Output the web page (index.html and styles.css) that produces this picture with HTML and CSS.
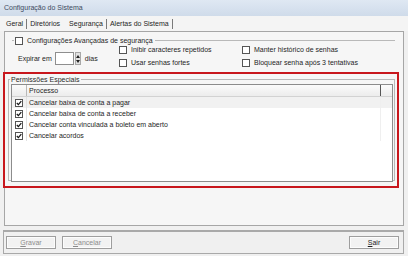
FILE: index.html
```html
<!DOCTYPE html>
<html lang="pt">

<head>
    <meta charset="UTF-8">
    <title>Configuração do Sistema</title>
    <link rel="stylesheet" href="styles.css">
</head>

<body>

    <div class="window">
        <div class="titlebar">Configuração do Sistema</div>

        <div class="tabs">
            <span class="tab sep">Geral</span>
            <span class="tab">Diretórios</span>
            <span class="tab active sep">Segurança</span>
            <span class="tab sep">Alertas do Sistema</span>
        </div>

        <div class="panel">
            <fieldset class="group adv">
                <legend><span class="cb"></span>Configurações Avançadas de segurança</legend>
                <div class="adv-body">
                    <div class="expire">
                        <span>Expirar em</span>
                        <span class="num"></span>
                        <span class="spin"><i class="up"></i><i class="down"></i></span>
                        <span class="unit">dias</span>
                    </div>
                    <div class="col col1">
                        <label class="opt"><span class="cb"></span>Inibir caracteres repetidos</label>
                        <label class="opt"><span class="cb"></span>Usar senhas fortes</label>
                    </div>
                    <div class="col">
                        <label class="opt"><span class="cb"></span>Manter histórico de senhas</label>
                        <label class="opt"><span class="cb"></span>Bloquear senha após 3 tentativas</label>
                    </div>
                </div>
            </fieldset>

            <div class="highlight">
                <fieldset class="group perm">
                    <legend>Permissões Especiais</legend>
                    <div class="grid">
                        <div class="grid-head">
                            <span class="c-check"></span>
                            <span class="c-text">Processo</span>
                            <span class="c-end"></span>
                        </div>
                        <div class="grid-row sel">
                            <span class="c-check"><span class="cb on"><svg viewBox="0 0 6 6"><path d="M0.8 3 L2.4 4.6 L5.3 1.2" /></svg></span></span>
                            <span class="c-text">Cancelar baixa de conta a pagar</span>
                            <span class="c-end"></span>
                        </div>
                        <div class="grid-row">
                            <span class="c-check"><span class="cb on"><svg viewBox="0 0 6 6"><path d="M0.8 3 L2.4 4.6 L5.3 1.2" /></svg></span></span>
                            <span class="c-text">Cancelar baixa de conta a receber</span>
                            <span class="c-end"></span>
                        </div>
                        <div class="grid-row">
                            <span class="c-check"><span class="cb on"><svg viewBox="0 0 6 6"><path d="M0.8 3 L2.4 4.6 L5.3 1.2" /></svg></span></span>
                            <span class="c-text">Cancelar conta vinculada a boleto em aberto</span>
                            <span class="c-end"></span>
                        </div>
                        <div class="grid-row">
                            <span class="c-check"><span class="cb on"><svg viewBox="0 0 6 6"><path d="M0.8 3 L2.4 4.6 L5.3 1.2" /></svg></span></span>
                            <span class="c-text">Cancelar acordos</span>
                            <span class="c-end"></span>
                        </div>
                    </div>
                </fieldset>
            </div>
        </div>

        <div class="footer">
            <button class="btn" disabled><u>G</u>ravar</button>
            <button class="btn" disabled><u>C</u>ancelar</button>
            <button class="btn exit"><u>S</u>air</button>
        </div>
    </div>

</body>

</html>
```

FILE: styles.css
```css
html,
body {
    margin: 0;
    height: 100%;
    font-family: "Liberation Sans", Arial, sans-serif;
    font-size: 7px;
    color: #1e1e1e;
}

body {
    background: #f0f0f0;
}

.window {
    width: 408px;
    height: 256px;
    display: flex;
    flex-direction: column;
    background: #f0f0f0;
}

.titlebar {
    height: 16px;
    line-height: 16px;
    padding-left: 4px;
    background: linear-gradient(#dfe8f3, #cfdbea);
    color: #3d4b5e;
}

/* tab strip */
.tabs {
    height: 15px;
    display: flex;
    align-items: center;
    padding-left: 3px;
    background: #f4f4f4;
}

.tab {
    padding: 0 3px;
    line-height: 10px;
}

.tab.sep {
    border-right: 1px solid #7a7a7a;
}

.tab.active {
    margin-left: 3px;
}

/* main panel */
.panel {
    height: 193px;
    margin: 0 4px;
    border: 1px solid #a6a6a6;
    background: #f6f6f6;
}

.group {
    margin: 0;
    padding: 0;
    border: 1px solid #b9b9b9;
}

.group legend {
    display: flex;
    align-items: center;
    margin-left: 2px;
    padding: 0 2px 0 1px;
    line-height: 9px;
}

.adv {
    margin: 4px 8px 0 7px;
    border: none;
    border-top: 1px solid #b9b9b9;
}

.adv legend .cb {
    margin-right: 4px;
}

.adv-body {
    display: flex;
    margin-top: -2px;
    padding-left: 6px;
}

.expire {
    width: 101px;
    flex: none;
    display: flex;
    align-items: center;
    margin-top: 9px;
    height: 13px;
}

.num {
    width: 17px;
    height: 11px;
    margin-left: 3px;
    border: 1px solid #8e8e8e;
    background: #fff;
}

.spin {
    width: 6px;
    height: 13px;
    margin-left: 1px;
    display: flex;
    flex-direction: column;
    justify-content: center;
    align-items: center;
    gap: 2px;
    background: #e2e2e2;
    border: 1px solid #a8a8a8;
    box-sizing: border-box;
}

.spin i {
    width: 0;
    height: 0;
    border-left: 2px solid transparent;
    border-right: 2px solid transparent;
}

.spin .up {
    border-bottom: 3px solid #222;
}

.spin .down {
    border-top: 3px solid #222;
}

.unit {
    margin-left: 4px;
}

.col {
    display: flex;
    flex-direction: column;
}

.col1 {
    width: 123px;
}

.opt {
    display: flex;
    align-items: center;
    height: 13px;
}

.opt .cb {
    margin-right: 4px;
}

.cb {
    width: 6px;
    height: 6px;
    flex: none;
    border: 1px solid #555;
    background: #fff;
    display: flex;
}

.cb svg {
    width: 6px;
    height: 6px;
}

.cb path {
    fill: none;
    stroke: #1a1a1a;
    stroke-width: 1.3;
}

/* red highlight round the permissions */
.highlight {
    height: 111px;
    margin: 3px 4px 0 -2px;
    border: 2px solid #c8171d;
    padding: 1px 2px 0 3px;
}

.perm {
    height: 104px;
    margin-right: 0;
}

.perm legend {
    margin-left: 1px;
    color: #2a2a2a;
}

.grid {
    margin: 0 1px 0 2px;
    height: 96px;
    border: 1px solid #8c8c8c;
    background: #fff;
}

.grid-head,
.grid-row {
    display: flex;
    align-items: center;
}

.grid-head {
    height: 11px;
    background: linear-gradient(#fbfbfb, #ececec);
    border-bottom: 1px solid #d2d2d2;
}

.grid-row {
    height: 11px;
}

.grid-row.sel {
    background: #f1f1f1;
}

.c-check {
    width: 14px;
    height: 100%;
    display: flex;
    align-items: center;
    justify-content: center;
    border-right: 1px solid #e2e2e2;
}

.grid-head .c-check {
    border-right-color: #b8b8b8;
}

.c-text {
    flex: 1;
    padding-left: 2px;
    color: #1e1e1e;
}

.c-end {
    width: 11px;
    height: 100%;
    border-left: 1px solid #efefef;
}

.grid-head .c-end {
    border-left-color: #555;
}

/* bottom buttons */
.footer {
    flex: 1;
    display: flex;
    align-items: center;
    margin: 4px 4px 2px 3px;
    padding: 0 4px 0 2px;
    border: 1px solid #a9a9a9;
    border-top: 2px solid #a9a9a9;
}

.btn {
    width: 50px;
    height: 13px;
    margin-right: 6px;
    padding: 0;
    font-family: inherit;
    font-size: 7px;
    background: #f2f2f2;
    border: 1px solid #9e9e9e;
    box-shadow: inset 0 0 0 1px #fcfcfc;
    color: #8c8c8c;
}

.btn.exit {
    margin: 0 0 0 auto;
    color: #1e1e1e;
}
```
